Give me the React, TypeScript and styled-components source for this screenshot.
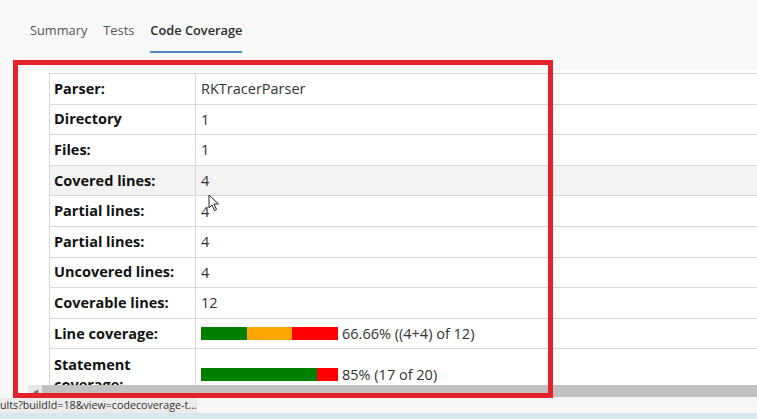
import React from 'react';
import styled, { createGlobalStyle } from 'styled-components';

const GlobalStyle = createGlobalStyle`
  html, body {
    margin: 0;
    padding: 0;
    background: #f8f8f8;
    overflow: hidden;
  }
  body {
    font-family: 'Open Sans', 'Noto Sans', sans-serif;
    color: #333;
  }
`;

const Page = styled.div`
  position: relative;
  width: 757px;
  height: 419px;
  display: flex;
  flex-direction: column;
  overflow: hidden;
`;

const TabBar = styled.div`
  display: flex;
  gap: 16px;
  padding-left: 30px;
  height: 53px;
`;

interface TabProps {
  active?: boolean;
}

const Tab = styled.div<TabProps>`
  display: flex;
  align-items: center;
  padding-top: 9px;
  font-size: 12.8px;
  font-weight: ${p => (p.active ? 600 : 400)};
  color: ${p => (p.active ? '#2b2b2b' : '#555')};
  border-bottom: 2px solid ${p => (p.active ? '#4a88c2' : 'transparent')};
  box-sizing: border-box;
`;

const Panel = styled.div`
  margin: 17px 0 0 28px;
  height: 315px;
  padding: 3px 0 0 21px;
  background: #fff;
  overflow: hidden;
  box-sizing: border-box;
`;

const Table = styled.table`
  width: 760px;
  border-collapse: collapse;
  font-size: 14.5px;
`;

interface RowProps {
  hover?: boolean;
}

const Row = styled.tr<RowProps>`
  background: ${p => (p.hover ? '#f3f3f3' : '#fff')};
`;

const Label = styled.td`
  width: 146px;
  height: 30.6px;
  box-sizing: border-box;
  padding: 0 12px 0 4px;
  border: 1px solid #d8d8d8;
  font-weight: 700;
  color: #111;
  line-height: 20px;
  vertical-align: middle;
`;

const TallLabel = styled(Label)`
  padding-top: 6px;
  vertical-align: top;
  height: 52px;
`;

const Value = styled.td`
  padding: 0 5px;
  border: 1px solid #d8d8d8;
  border-right: none;
  color: #333;
  vertical-align: middle;
`;

const BarWrap = styled.div`
  display: flex;
  align-items: center;
  gap: 4px;
`;

const Bar = styled.div`
  display: flex;
  width: 137px;
  height: 13px;
`;

interface SegProps {
  color: string;
}

const Seg = styled.div<SegProps>`
  background: ${p => p.color};
`;

const Scrollbar = styled.div`
  display: flex;
  margin-left: 28px;
  height: 12px;
  background: #c1c1c1;
`;

const ScrollArrow = styled.div`
  width: 14px;
  background: #e6e6e6;
  display: flex;
  align-items: center;
  justify-content: center;
  font-size: 7px;
  color: #777;
`;

const Filler = styled.div`
  flex: 1;
  background: #f6f6f6;
`;

const BlueBand = styled.div`
  height: 6px;
  background: #d8e7ef;
`;

const StatusBubble = styled.div`
  position: absolute;
  left: 0;
  bottom: 6px;
  width: 197px;
  height: 15px;
  background: #ebebeb;
  font-size: 10.7px;
  line-height: 15px;
  color: #333;
  white-space: nowrap;
  overflow: hidden;
`;

const Highlight = styled.div`
  position: absolute;
  left: 13px;
  top: 60px;
  width: 540px;
  height: 338px;
  border: 5px solid #e4222b;
  box-sizing: border-box;
  pointer-events: none;
`;

const Cursor = styled.svg`
  position: absolute;
  left: 208px;
  top: 194px;
`;

const rows: [string, string][] = [
  ['Parser:', 'RKTracerParser'],
  ['Directory', '1'],
  ['Files:', '1'],
  ['Covered lines:', '4'],
  ['Partial lines:', '4'],
  ['Partial lines:', '4'],
  ['Uncovered lines:', '4'],
  ['Coverable lines:', '12'],
];

const App: React.FC = () => {
  return (
    <>
      <GlobalStyle />
      <Page>
        <TabBar>
          <Tab>Summary</Tab>
          <Tab>Tests</Tab>
          <Tab active>Code Coverage</Tab>
        </TabBar>

        <Panel>
          <Table>
            <tbody>
              {rows.map(([label, value], i) => (
                <Row key={i} hover={label === 'Covered lines:'}>
                  <Label>{label}</Label>
                  <Value>{value}</Value>
                </Row>
              ))}
              <Row>
                <Label>Line coverage:</Label>
                <Value>
                  <BarWrap>
                    <Bar>
                      <Seg color="#008000" style={{ width: '33.33%' }} />
                      <Seg color="#ffa500" style={{ width: '33.33%' }} />
                      <Seg color="#ff0000" style={{ width: '33.34%' }} />
                    </Bar>
                    66.66% ((4+4) of 12)
                  </BarWrap>
                </Value>
              </Row>
              <Row>
                <TallLabel>Statement coverage:</TallLabel>
                <Value>
                  <BarWrap>
                    <Bar>
                      <Seg color="#008000" style={{ width: '85%' }} />
                      <Seg color="#ff0000" style={{ width: '15%' }} />
                    </Bar>
                    85% (17 of 20)
                  </BarWrap>
                </Value>
              </Row>
            </tbody>
          </Table>
        </Panel>

        <Scrollbar>
          <ScrollArrow>◀</ScrollArrow>
        </Scrollbar>
        <Filler />
        <BlueBand />

        <StatusBubble>ults?buildId=18&amp;view=codecoverage-t...</StatusBubble>
        <Cursor width="12" height="18" viewBox="0 0 12 18">
          <path d="M1 1 L1 14 L4 11 L6.5 16.5 L8.5 15.5 L6 10 L10.5 10 Z" fill="#fff" stroke="#222" strokeWidth="1" strokeLinejoin="round" />
        </Cursor>
        <Highlight />
      </Page>
    </>
  );
};

export default App;
